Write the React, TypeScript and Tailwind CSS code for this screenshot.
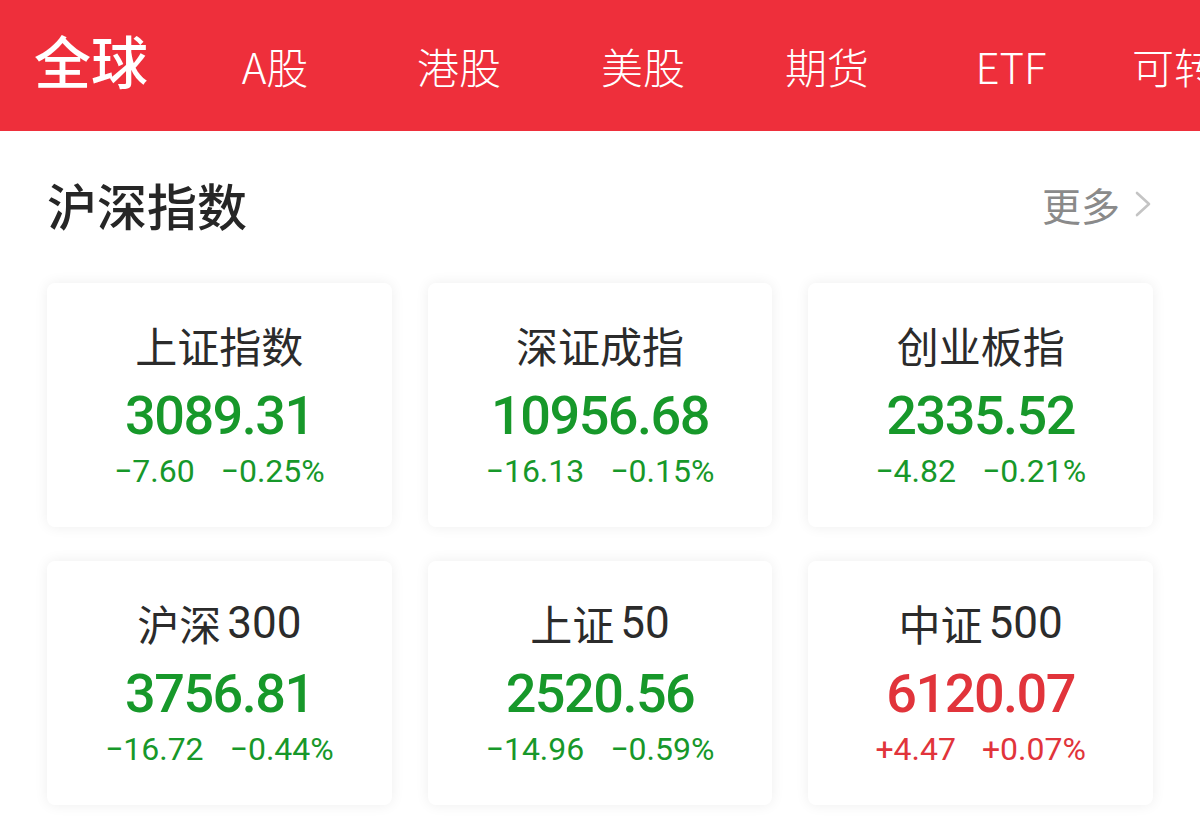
import React from 'react'

// ── Data ──────────────────────────────────────────────────────────────────────

const TABS = ['A股', '港股', '美股', '期货', 'ETF', '可转债']

interface IndexItem {
  name: string
  num?: string
  value: string
  change: string
  pct: string
  up: boolean
}

const INDICES: IndexItem[] = [
  { name: '上证指数', value: '3089.31', change: '−7.60', pct: '−0.25%', up: false },
  { name: '深证成指', value: '10956.68', change: '−16.13', pct: '−0.15%', up: false },
  { name: '创业板指', value: '2335.52', change: '−4.82', pct: '−0.21%', up: false },
  { name: '沪深', num: '300', value: '3756.81', change: '−16.72', pct: '−0.44%', up: false },
  { name: '上证', num: '50', value: '2520.56', change: '−14.96', pct: '−0.59%', up: false },
  { name: '中证', num: '500', value: '6120.07', change: '+4.47', pct: '+0.07%', up: true },
]

const CJK = "font-['Noto_Sans_CJK_SC','Noto_Sans',sans-serif]"
const NUM = "font-['Roboto','Noto_Sans',sans-serif]"

// ── Header tabs ───────────────────────────────────────────────────────────────

function TopTabs() {
  return (
    <div className={`flex h-[131px] items-center overflow-hidden bg-[#ee2f3b] text-white ${CJK}`}>
      <div className="-ml-px flex shrink-0 items-center">
        <div className="flex w-[184px] shrink-0 justify-center pb-[12px] text-[57px] font-medium leading-none">
          全球
        </div>
        {TABS.map(t => (
          <div key={t} className="flex w-[184px] shrink-0 justify-center whitespace-nowrap text-[42px] font-light leading-none">
            {t}
          </div>
        ))}
      </div>
    </div>
  )
}

// ── Card ──────────────────────────────────────────────────────────────────────

function IndexCard({ item }: { item: IndexItem }) {
  const color = item.up ? 'text-[#e1343b]' : 'text-[#17982a]'
  return (
    <div className="flex h-[244px] flex-col items-center rounded-lg bg-white pt-[38px] shadow-[0_0_14px_rgba(0,0,0,0.07)]">
      <div className={`flex h-[48px] items-center text-[42px] leading-none text-[#2b2b2b] ${CJK}`}>
        {item.name}
        {item.num && <span className={`ml-[6px] ${NUM} text-[44px]`}>{item.num}</span>}
      </div>
      <div className={`mt-[17px] h-[60px] text-[54px] font-medium leading-[60px] tracking-[-1.5px] ${color} ${NUM}`}>
        {item.value}
      </div>
      <div className={`mt-[7px] flex h-[36px] items-center gap-[26px] text-[32px] leading-none ${color} ${NUM}`}>
        <span>{item.change}</span>
        <span>{item.pct}</span>
      </div>
    </div>
  )
}

// ── Page ──────────────────────────────────────────────────────────────────────

export default function App() {
  return (
    <div className="h-[840px] w-[1200px] overflow-hidden bg-white">
      <TopTabs />

      <div className="flex items-center justify-between pl-[47px] pr-[48px] pt-[49px]">
        <div className={`h-[48px] text-[50px] font-medium leading-[48px] text-[#262626] ${CJK}`}>沪深指数</div>
        <div className={`flex items-center gap-[14px] text-[39px] leading-none text-[#8a8a8a] ${CJK}`}>
          更多
          <svg width="18" height="28" viewBox="0 0 18 28" fill="none">
            <path d="M3 3 L15 14 L3 25" stroke="#c4c4c4" strokeWidth="2.6" strokeLinecap="round" strokeLinejoin="round" />
          </svg>
        </div>
      </div>

      <div className="mt-[55px] grid grid-cols-3 gap-x-[36px] gap-y-[34px] px-[47px]">
        {INDICES.map(it => (
          <IndexCard key={it.name + (it.num ?? '')} item={it} />
        ))}
      </div>
    </div>
  )
}
